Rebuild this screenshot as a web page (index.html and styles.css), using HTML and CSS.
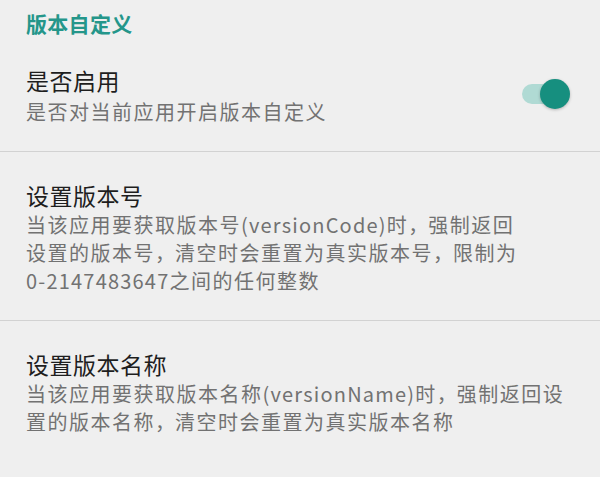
FILE: index.html
```html
<!DOCTYPE html>
<html lang="zh-CN">
<head>
<meta charset="utf-8">
<link rel="stylesheet" href="styles.css">
</head>
<body>
<div class="screen">
  <div class="category">版本自定义</div>
  <div class="pref pref-first">
    <div class="pref-text">
      <div class="pref-title">是否启用</div>
      <div class="pref-summary">是否对当前应用开启版本自定义</div>
    </div>
    <div class="switch">
      <div class="switch-track"></div>
      <div class="switch-thumb"></div>
    </div>
  </div>
  <div class="divider"></div>
  <div class="pref">
    <div class="pref-text">
      <div class="pref-title">设置版本号</div>
      <div class="pref-summary">当该应用要获取版本号<span class="latin">(versionCode)</span>时<span class="comma">，</span>强制返回<br>设置的版本号<span class="comma">，</span>清空时会重置为真实版本号<span class="comma">，</span>限制为<br><span class="latin">0-2147483647</span>之间的任何整数</div>
    </div>
  </div>
  <div class="divider"></div>
  <div class="pref">
    <div class="pref-text">
      <div class="pref-title">设置版本名称</div>
      <div class="pref-summary">当该应用要获取版本名称<span class="latin">(versionName)</span>时<span class="comma">，</span>强制返回设<br>置的版本名称<span class="comma">，</span>清空时会重置为真实版本名称</div>
    </div>
  </div>
</div>
</body>
</html>
```

FILE: styles.css
```css
html, body {
  margin: 0;
  padding: 0;
  background: #efefef;
}

.screen {
  width: 600px;
  height: 477px;
  overflow: hidden;
  background: #efefef;
  font-family: "Noto Sans CJK SC", "Noto Sans", sans-serif;
}

.category {
  padding: 9px 0 0 26px;
  font-size: 21px;
  line-height: 28px;
  font-weight: 700;
  letter-spacing: 0.3px;
  color: #24968a;
}

.pref {
  display: flex;
  align-items: center;
  padding: 29px 30px 25px 26px;
}

.pref-first {
  padding-top: 29px;
}

.pref-first .pref-summary {
  margin-top: 4px;
}

.pref-text {
  flex: 1;
  min-width: 0;
}

.pref-title {
  font-size: 23px;
  line-height: 28px;
  letter-spacing: 0.5px;
  color: #1e1e1e;
  white-space: nowrap;
}

.pref-summary {
  margin-top: 2px;
  font-size: 20px;
  line-height: 28px;
  letter-spacing: 1.5px;
  color: #727272;
  white-space: nowrap;
}

.latin {
  letter-spacing: 1.2px;
}

.comma {
  letter-spacing: -4px;
  margin-right: 4px;
}

.divider {
  height: 1px;
  background: #d2d2d2;
}

.switch {
  position: relative;
  flex: none;
  width: 48px;
  height: 30px;
  margin-top: -4px;
}

.switch-track {
  position: absolute;
  left: 0;
  top: 5px;
  width: 44px;
  height: 20px;
  border-radius: 10px;
  background: #b0dad4;
}

.switch-thumb {
  position: absolute;
  right: 0;
  top: 0;
  width: 30px;
  height: 30px;
  border-radius: 50%;
  background: #168f7f;
  box-shadow: 0 1px 3px rgba(0, 0, 0, 0.25);
}
```
